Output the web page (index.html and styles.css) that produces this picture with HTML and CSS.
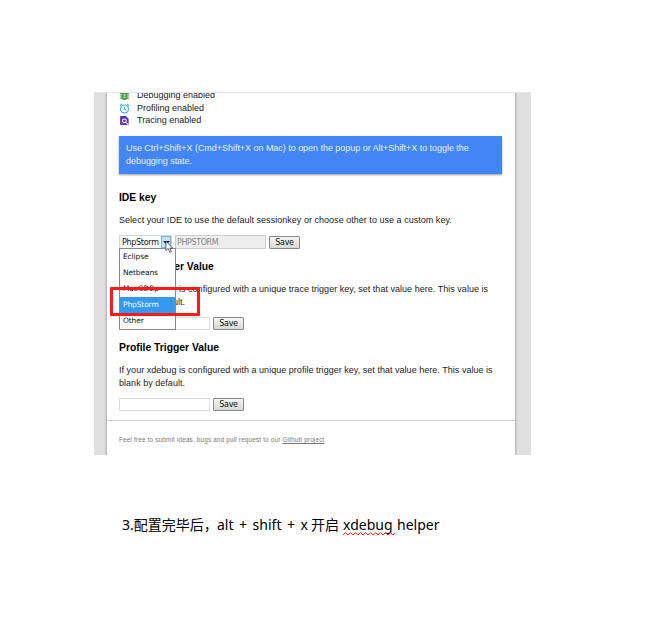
FILE: index.html
```
<!DOCTYPE html>
<html lang="zh">
<head>
<meta charset="utf-8">
<title>Xdebug helper</title>
<link rel="stylesheet" href="styles.css">
</head>
<body>
<main class="document">
  <section class="capture">
    <div class="sheet">
      <ul class="features">
        <li>
          <svg class="icon" viewBox="0 0 12 12"><path d="M3.2 2.2 4.3 3h3.4l1.1-.8M1.2 4h9.6M1.2 6.4h9.6M1.2 8.9h9.6" stroke="#43a047" stroke-width="1.4" fill="none"/><rect x="3" y="2" width="6" height="9" rx="2.6" fill="#43a047"/><path d="M4.8 5.5h2.4M4.8 7.8h2.4" stroke="#fff"/></svg>
          <span>Debugging enabled</span>
        </li>
        <li>
          <svg class="icon" viewBox="0 0 12 12" fill="none" stroke="#3fa9e8"><circle cx="6" cy="6.5" r="4.3" stroke-width="1.3"/><path d="M6 4v2.8l2 1.1M1 3.2 3.3 1.1M11 3.2 8.7 1.1" stroke-width="1.2"/></svg>
          <span>Profiling enabled</span>
        </li>
        <li>
          <svg class="icon" viewBox="0 0 12 12"><path d="M2.2 1h5.3l3 3v6a1 1 0 0 1-1 1H2.2a1 1 0 0 1-1-1V2a1 1 0 0 1 1-1z" fill="#5e35b1"/><circle cx="5.8" cy="6.4" r="2.1" fill="none" stroke="#fff" stroke-width="1.1"/><path d="m7.3 7.9 2.4 2.4" stroke="#fff" stroke-width="1.1"/></svg>
          <span>Tracing enabled</span>
        </li>
      </ul>
      <p class="notice">Use Ctrl+Shift+X (Cmd+Shift+X on Mac) to open the popup or Alt+Shift+X to toggle the<br>debugging state.</p>

      <section class="setting">
        <h2>IDE key</h2>
        <p>Select your IDE to use the default sessionkey or choose other to use a custom key.</p>
        <div class="controls ide">
          <div class="select">
            <span class="value">PhpStorm</span><span class="arrow"></span>
            <ul class="options">
              <li>Eclipse</li>
              <li>Netbeans</li>
              <li>MacGDBp</li>
              <li class="selected">PhpStorm</li>
              <li>Other</li>
            </ul>
            <span class="marker"></span>
            <svg class="cursor" viewBox="0 0 10 15"><path d="M1 1v10.5l2.5-2.2 1.8 4.2 1.8-.8-1.8-4h3.2z" fill="#fff" stroke="#344050" stroke-width=".9"/></svg>
          </div>
          <span class="field disabled">PHPSTORM</span>
          <button>Save</button>
        </div>
      </section>

      <section class="setting">
        <h2>Trace Trigger Value</h2>
        <p>If your xdebug is configured with a unique trace trigger key, set that value here. This value is<br>blank by default.</p>
        <div class="controls"><span class="field"></span><button>Save</button></div>
      </section>

      <section class="setting last">
        <h2>Profile Trigger Value</h2>
        <p>If your xdebug is configured with a unique profile trigger key, set that value here. This value is<br>blank by default.</p>
        <div class="controls"><span class="field"></span><button>Save</button></div>
      </section>

      <footer>Feel free to submit ideas, bugs and pull request to our <span class="link">Github project</span></footer>
    </div>
  </section>
  <p class="step"><span class="zh-start">3.配置完毕后，</span><span class="keys">alt + shift + x</span><span class="zh-open">开启</span><span class="term">xdebug<svg class="squiggle" viewBox="0 0 52 4"><path d="m0 3 2.5-2.4L5 3 7.5.6 10 3 12.5.6 15 3 17.5.6 20 3 22.5.6 25 3 27.5.6 30 3 32.5.6 35 3 37.5.6 40 3 42.5.6 45 3 47.5.6 50 3 52 1" fill="none" stroke="#f02020"/></svg></span><span class="help">helper</span></p>
</main>
</body>
</html>
```
FILE: styles.css
```
* { box-sizing: border-box; }
body { margin: 0; background: #fff; }
p, h2, ul { margin: 0; padding: 0; }
ul { list-style: none; }

.document { height: 621px; padding: 92px 0 0 94px; overflow: hidden; }

.capture {
  width: 437px;
  height: 363px;
  padding: 0 16px 0 13px;
  overflow: hidden;
  background: #e1e0df;
  border-top: 1px solid #e6e6e6;
  font: 9px/13px "Liberation Sans", Arial, sans-serif;
  color: #222;
}

.sheet {
  display: flow-root;
  height: 363px;
  padding: 0 13px 0 12px;
  background: #fff;
  box-shadow: 0 0 2px 1px #aaa;
}

.features { height: 47px; margin-top: -4px; }
.features li { display: flex; align-items: center; height: 12.7px; white-space: nowrap; }
.icon { width: 11px; height: 11px; margin: 0 7px 0 0; }

.notice {
  height: 38px;
  padding: 6px 7px;
  background: #4285f4;
  color: #e8f0ff;
  box-shadow: 0 1px 2px #999;
  letter-spacing: -.035px;
  white-space: nowrap;
}

.setting { height: 81px; white-space: nowrap; }
.notice + .setting { height: 69px; margin-top: 17px; }
.setting.last { height: 79px; }
h2 { font-size: 10.35px; line-height: 13px; color: #000; }
.setting p { margin-top: 10px; letter-spacing: .028px; }
.controls { display: flex; align-items: center; gap: 3px; height: 13px; margin-top: 8px; }

.field { width: 91px; height: 13px; border: 1px solid #ddd; background: #fff; }
.field.disabled {
  height: 14px;
  padding-left: 1px;
  border-color: #ccc;
  background: #eee;
  color: #888;
  font: 8px/13px "DejaVu Sans", sans-serif;
  letter-spacing: -.4px;
}
button {
  width: 31px;
  height: 13px;
  padding: 0;
  border: 1px solid #888;
  border-radius: 1px;
  background: linear-gradient(#f5f5f5, #d8d8d8);
  color: #111;
  font: 8px/11px "DejaVu Sans", sans-serif;
  letter-spacing: -.3px;
}

.ide { gap: 0; height: 14px; }
.ide button { margin-left: 3px; }
.select {
  position: relative;
  display: flex;
  width: 53px;
  height: 14px;
  margin-right: 3px;
  border: 1px solid #ccd9e5;
  background: #fff;
  font: 8px/13px "DejaVu Sans", sans-serif;
  letter-spacing: -.3px;
  color: #111;
}
.value { width: 41px; padding-left: 2px; }
.arrow { width: 10px; height: 12px; background: #c5e3f7; border: 1px solid #79b5df; }
.arrow::after { content: ""; display: block; margin: 4px 0 0 1px; border: 3px solid transparent; border-top-color: #111; }
.options {
  position: absolute;
  z-index: 1;
  left: -1px;
  top: 12px;
  width: 57px;
  height: 82px;
  border: 1px solid #888;
  background: #fff;
  font-size: 7.5px;
  letter-spacing: -.12px;
}
.options li { height: 16px; padding-left: 3px; line-height: 16px; }
.options .selected { background: #3399f3; color: #fff; }
.marker {
  position: absolute;
  z-index: 2;
  left: -10px;
  top: 51px;
  width: 90px;
  height: 29px;
  border: 3px solid #f51b1b;
  border-radius: 1px;
}
.cursor { position: absolute; z-index: 3; left: 45px; top: 4px; width: 9px; height: 14px; }

footer {
  margin: 0 -13px 0 -12px;
  padding: 13px 0 0 12px;
  border-top: 1px solid #ccc;
  color: #777;
  font-size: 6.3px;
  letter-spacing: .2px;
  line-height: 12px;
}
.link { text-decoration: underline; }

.step {
  display: flex;
  margin: 58px 0 0 28px;
  white-space: nowrap;
  font: 14px/24px "Noto Sans", "Noto Sans CJK SC", sans-serif;
  color: #000;
}
.zh-start { width: 95px; }
.keys { width: 94px; word-spacing: 1.9px; }
.zh-open { width: 32px; }
.term { position: relative; width: 54px; }
.squiggle { position: absolute; left: 0; bottom: 1px; width: 52px; height: 4px; }
```
